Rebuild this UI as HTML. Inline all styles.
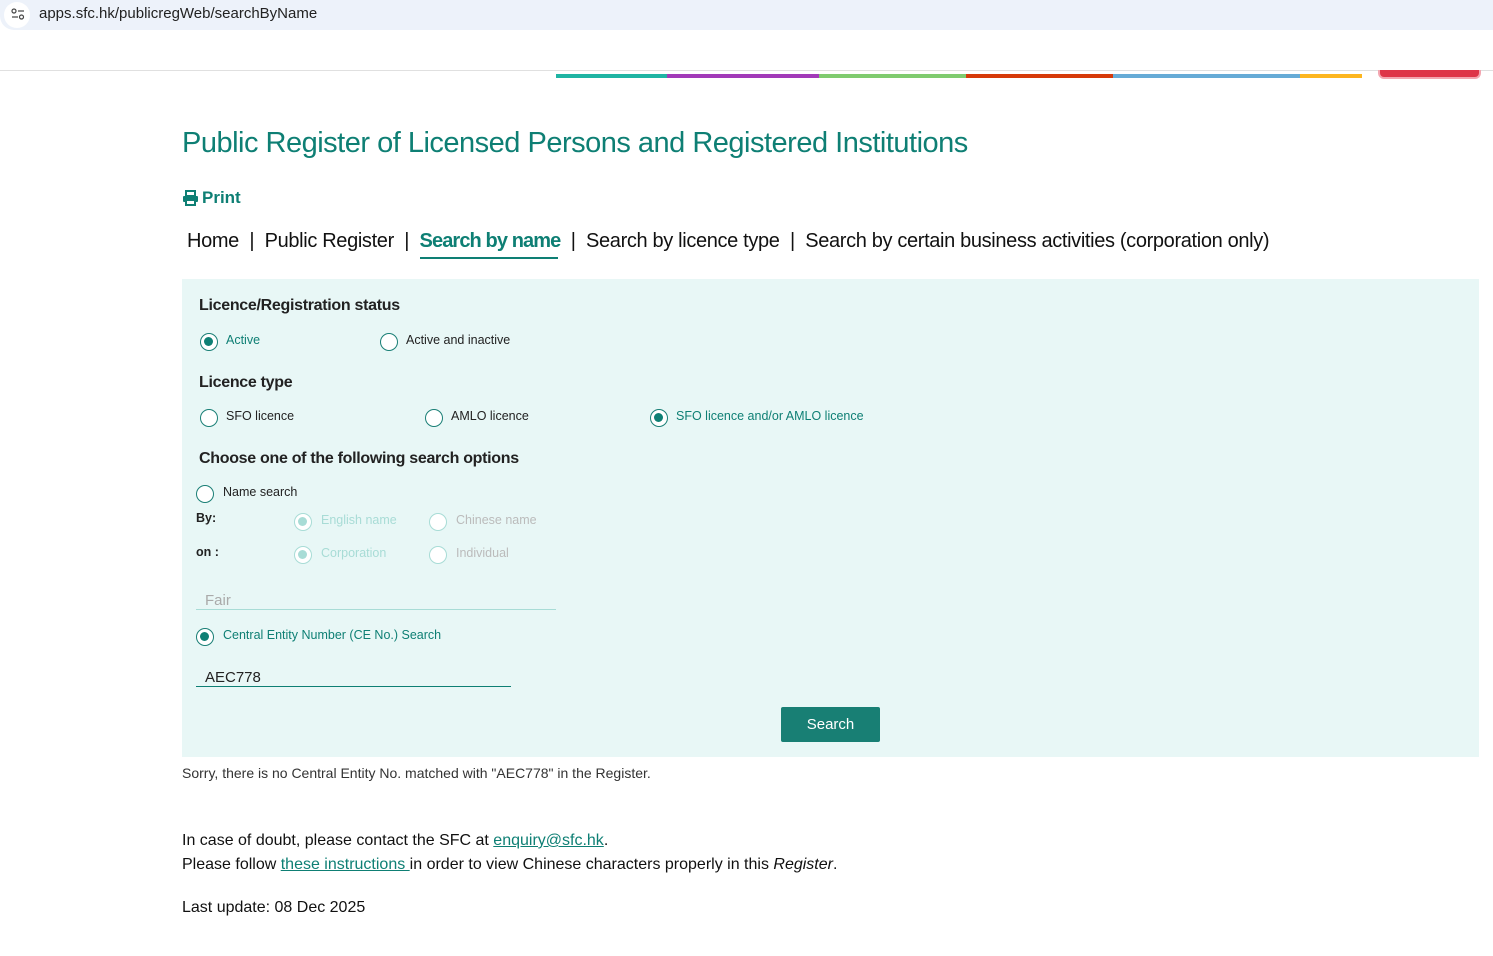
<!DOCTYPE html>
<html><head><meta charset="utf-8"><style>
*{margin:0;padding:0;box-sizing:border-box}
body{width:1493px;height:956px;position:relative;background:#fff;font-family:"Liberation Sans",sans-serif;color:#222;overflow:hidden}
.a{position:absolute;white-space:nowrap}
.r{position:absolute;width:18px;height:18px;border:1.5px solid #1a7f76;border-radius:50%;background:#fff}
.r.on::after{content:"";position:absolute;left:3px;top:3px;width:9px;height:9px;border-radius:50%;background:#0e7f74}
.r.dis{border-color:#a8dcd6}
.r.dis.on::after{background:#a8dcd6}
.lab{font-size:12.5px;letter-spacing:0}
.tl{color:#0e7f74}
.h{font-size:16px;font-weight:bold;color:#222;letter-spacing:-0.3px}
</style></head><body>
<div class="a" style="left:0;top:0;width:1493px;height:30px;background:#edf2fa;border-radius:0 0 0 14px"></div>
<div class="a" style="left:4px;top:2px;width:26px;height:26px;border-radius:50%;background:#fff"></div>
<svg class="a" style="left:11px;top:8px" width="14" height="12" viewBox="0 0 14 12"><circle cx="3" cy="3" r="2" fill="none" stroke="#444" stroke-width="1.2"/><line x1="7" y1="3" x2="13" y2="3" stroke="#444" stroke-width="1.2"/><line x1="1" y1="9" x2="7" y2="9" stroke="#444" stroke-width="1.2"/><circle cx="10.5" cy="9" r="2" fill="none" stroke="#444" stroke-width="1.2"/></svg>
<div class="a" style="left:39px;top:5px;font-size:15px;color:#222">apps.sfc.hk/publicregWeb/searchByName</div>
<div class="a" style="left:0;top:70px;width:1493px;height:1px;background:#e0e0e0"></div>
<div class="a" style="left:556px;top:74px;width:111px;height:4px;background:#1fb4a3"></div>
<div class="a" style="left:667px;top:74px;width:152px;height:4px;background:#a23ab8"></div>
<div class="a" style="left:819px;top:74px;width:147px;height:4px;background:#7fcb6f"></div>
<div class="a" style="left:966px;top:74px;width:147px;height:4px;background:#d63a0a"></div>
<div class="a" style="left:1113px;top:74px;width:187px;height:4px;background:#66abd6"></div>
<div class="a" style="left:1300px;top:74px;width:62px;height:4px;background:#fdb61f"></div>
<div class="a" style="left:1378px;top:70px;width:103px;height:9px;background:#de3548;border:2px solid #f3a6b0;border-top:none;border-radius:0 0 6px 6px"></div>

<div class="a" style="left:182px;top:127px;font-size:29px;color:#0e7f74;letter-spacing:-0.5px">Public Register of Licensed Persons and Registered Institutions</div>
<svg class="a" style="left:182px;top:190px" width="17" height="16" viewBox="0 0 17 16"><rect x="4" y="1" width="9" height="5" fill="none" stroke="#0e7f74" stroke-width="2"/><rect x="1" y="6" width="15" height="6" rx="1" fill="#0e7f74"/><rect x="4" y="10" width="9" height="5" fill="#fff" stroke="#0e7f74" stroke-width="2"/></svg>
<div class="a" style="left:202px;top:188px;font-size:17px;font-weight:bold;color:#0e7f74">Print</div>
<div class="a" style="left:187px;top:230px;font-size:20px;letter-spacing:-0.35px;color:#111">Home&nbsp; | &nbsp;Public Register&nbsp; | &nbsp;<span style="color:#0e7f74;font-weight:bold;letter-spacing:-0.9px">Search by name</span>&nbsp; | &nbsp;Search by licence type&nbsp; | &nbsp;Search by certain business activities (corporation only)</div>
<div class="a" style="left:420px;top:257px;width:138px;height:2px;background:#0e7f74"></div>

<div class="a" style="left:182px;top:279px;width:1297px;height:478px;background:#e8f7f6"></div>
<div class="a h" style="left:199px;top:297px">Licence/Registration status</div>
<div class="r on" style="left:200px;top:333px"></div><div class="a lab tl" style="left:226px;top:333px">Active</div>
<div class="r" style="left:380px;top:333px"></div><div class="a lab" style="left:406px;top:333px">Active and inactive</div>
<div class="a h" style="left:199px;top:374px">Licence type</div>
<div class="r" style="left:200px;top:409px"></div><div class="a lab" style="left:226px;top:409px">SFO licence</div>
<div class="r" style="left:425px;top:409px"></div><div class="a lab" style="left:451px;top:409px">AMLO licence</div>
<div class="r on" style="left:650px;top:409px"></div><div class="a lab tl" style="left:676px;top:409px">SFO licence and/or AMLO licence</div>
<div class="a h" style="left:199px;top:450px">Choose one of the following search options</div>
<div class="r" style="left:196px;top:485px"></div><div class="a lab" style="left:223px;top:485px">Name search</div>
<div class="a lab" style="left:196px;top:511px;font-weight:bold">By:</div>
<div class="r dis on" style="left:294px;top:513px"></div><div class="a lab" style="left:321px;top:513px;color:#a8dcd6">English name</div>
<div class="r dis" style="left:429px;top:513px"></div><div class="a lab" style="left:456px;top:513px;color:#bbb">Chinese name</div>
<div class="a lab" style="left:196px;top:545px;font-weight:bold">on :</div>
<div class="r dis on" style="left:294px;top:546px"></div><div class="a lab" style="left:321px;top:546px;color:#a8dcd6">Corporation</div>
<div class="r dis" style="left:429px;top:546px"></div><div class="a lab" style="left:456px;top:546px;color:#bbb">Individual</div>
<div class="a" style="left:205px;top:592px;font-size:15px;color:#aaa">Fair</div>
<div class="a" style="left:196px;top:609px;width:360px;height:1px;background:#a8dcd6"></div>
<div class="r on" style="left:196px;top:628px"></div><div class="a lab tl" style="left:223px;top:628px">Central Entity Number (CE No.) Search</div>
<div class="a" style="left:205px;top:669px;font-size:15px;color:#222">AEC778</div>
<div class="a" style="left:196px;top:686px;width:315px;height:1px;background:#0e7f74"></div>
<div class="a" style="left:781px;top:707px;width:99px;height:35px;background:#187f74;border-radius:2px;color:#fff;font-size:15px;text-align:center;line-height:35px">Search</div>

<div class="a" style="left:182px;top:765px;font-size:14px;color:#333">Sorry, there is no Central Entity No. matched with "AEC778" in the Register.</div>
<div class="a" style="left:182px;top:832px;font-size:16px;color:#111">In case of doubt, please contact the SFC at <span style="color:#0e7f74;text-decoration:underline">enquiry@sfc.hk</span>.</div>
<div class="a" style="left:182px;top:856px;font-size:16px;color:#111">Please follow <span style="color:#0e7f74;text-decoration:underline">these instructions </span>in order to view Chinese characters properly in this <i>Register</i>.</div>
<div class="a" style="left:182px;top:899px;font-size:16px;color:#111">Last update: 08 Dec 2025</div>
</body></html>
